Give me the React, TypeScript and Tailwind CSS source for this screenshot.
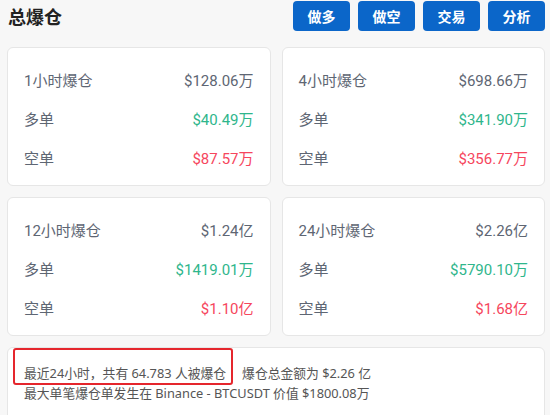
const stats = [
  { title: "1小时爆仓", total: "$128.06万", long: "$40.49万", short: "$87.57万" },
  { title: "4小时爆仓", total: "$698.66万", long: "$341.90万", short: "$356.77万" },
  { title: "12小时爆仓", total: "$1.24亿", long: "$1419.01万", short: "$1.10亿" },
  { title: "24小时爆仓", total: "$2.26亿", long: "$5790.10万", short: "$1.68亿" },
];

const actions = ["做多", "做空", "交易", "分析"];

function StatCard({ title, total, long, short }: (typeof stats)[number]) {
  return (
    <div className="h-[139px] rounded-md border border-[#e6e6e6] bg-white px-4 pt-[14px] pb-2 font-['Roboto','Noto_Sans_CJK_SC',sans-serif] text-[15px]">
      <div className="flex h-[39px] items-center justify-between">
        <span className="text-[#5e6673]">{title}</span>
        <span className="text-[#5e6673]">{total}</span>
      </div>
      <div className="flex h-[39px] items-center justify-between">
        <span className="text-[#5e6673]">多单</span>
        <span className="text-[#2fb68c]">{long}</span>
      </div>
      <div className="flex h-[39px] items-center justify-between">
        <span className="text-[#5e6673]">空单</span>
        <span className="text-[#f6465d]">{short}</span>
      </div>
    </div>
  );
}

export default function App() {
  return (
    <div className="min-h-[415px] w-[550px] overflow-hidden bg-[#f7f7f7] pl-[7px] pr-[5px] pt-px">
      <div className="flex h-[30px] items-center justify-between">
        <h1 className="pl-px font-['Noto_Sans_CJK_SC',sans-serif] text-[18px] font-bold text-[#222]">总爆仓</h1>
        <div className="flex gap-2">
          {actions.map((a) => (
            <button
              key={a}
              className="h-[30px] w-[57px] rounded bg-[#0b66c9] font-['Noto_Sans_CJK_SC',sans-serif] text-[14px] font-bold text-white"
            >
              {a}
            </button>
          ))}
        </div>
      </div>

      <div className="mt-4 grid grid-cols-2 gap-[11px]">
        {stats.map((s) => (
          <StatCard key={s.title} {...s} />
        ))}
      </div>

      <div className="relative mt-[11px] h-[80px] rounded-md border border-[#e6e6e6] bg-white px-4 pt-[15px] font-['Noto_Sans','Noto_Sans_CJK_SC',sans-serif] text-[12.8px] leading-[20px] text-[#555]">
        <div className="flex gap-4">
          <span>最近24小时，共有 64.783 人被爆仓</span>
          <span>爆仓总金额为 $2.26 亿</span>
        </div>
        <div>最大单笔爆仓单发生在 Binance - BTCUSDT 价值 $1800.08万</div>
        <div className="absolute left-[5px] top-0 h-[37px] w-[220px] rounded-[3px] border-2 border-[#e5262d]" />
      </div>
    </div>
  );
}
